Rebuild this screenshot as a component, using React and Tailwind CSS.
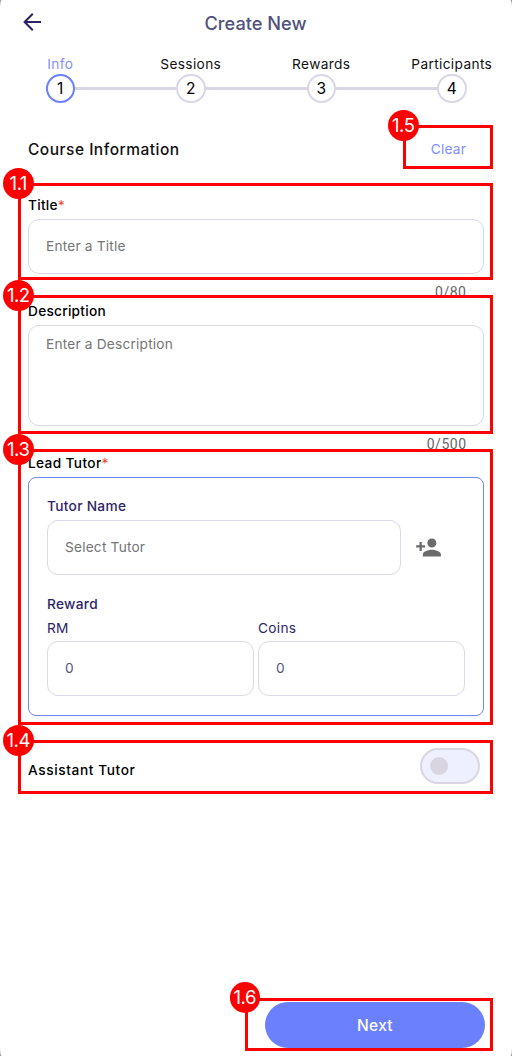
import React from "react";

const steps = [
  { n: 1, label: "Info", active: true },
  { n: 2, label: "Sessions" },
  { n: 3, label: "Rewards" },
  { n: 4, label: "Participants" },
];

function Stepper() {
  return (
    <ol className="mt-2 flex h-[51px] w-[522px] -translate-x-[5px]">
      {steps.map((s, i) => (
        <li key={s.n} className="flex w-[130.5px] shrink-0 flex-col items-center">
          <span
            className={`h-5 whitespace-nowrap text-[13.7px] leading-5 tracking-[0.36px] ${
              s.active ? "text-[#8292ff]" : "text-[#111]"
            }`}
          >
            {s.label}
          </span>
          <div className="-mt-[0.5px] flex w-full items-center">
            <span className={`h-[3px] flex-1 ${i > 0 ? "bg-[#d9d7e6]" : ""}`} />
            <span
              className={`flex h-[29.5px] w-[29.5px] items-center justify-center rounded-full border-2 text-[15.5px] leading-none text-black ${
                s.active ? "border-[#6b80ff]" : "border-[#d9d7e6]"
              }`}
            >
              {s.n}
            </span>
            <span className={`h-[3px] flex-1 ${i < 3 ? "bg-[#d9d7e6]" : ""}`} />
          </div>
        </li>
      ))}
    </ol>
  );
}

function Label({ children, required, tracking = "tracking-[0.25px]" }) {
  return (
    <div className={`h-5 text-[13.7px] font-medium leading-5 text-black ${tracking}`}>
      {children}
      {required && <span className="font-normal text-[#f44336]">*</span>}
    </div>
  );
}

function Field({ children, className = "" }) {
  return (
    <div
      className={`rounded-[11px] border border-[#dad9e7] px-[17px] text-[13.7px] tracking-[0.2px] ${className}`}
    >
      {children}
    </div>
  );
}

function Counter({ children }) {
  return (
    <div className="flex h-[27px] items-end justify-end pr-[17.5px] font-['Roboto',sans-serif] text-[14px] leading-[18px] tracking-[0.5px] text-[#666]">
      {children}
    </div>
  );
}

function Marker({ box, badge, children }) {
  return (
    <>
      <div className={`pointer-events-none absolute border-3 border-[#ff0000] ${box}`} />
      <div
        className={`pointer-events-none absolute flex h-[30.5px] w-[30.5px] items-center justify-center rounded-full bg-[#ff0000] text-[18.5px] leading-none tracking-[-0.5px] text-white ${badge}`}
      >
        {children}
      </div>
    </>
  );
}

export default function App() {
  return (
    <div className="h-[1056px] w-[512px] overflow-hidden bg-[#999]">
      <main className="relative flex h-full w-full flex-col overflow-hidden rounded-[1.5px/9px] bg-white font-['Inter',sans-serif]">
        <header className="flex h-[46px] shrink-0 items-center pl-[21px]">
          <svg className="h-[22px] w-[22px] shrink-0 -translate-y-px" viewBox="0 0 22 22" fill="none" stroke="#2b2169" strokeWidth="2">
            <path d="M20 11H3.600M11.800 2.800L3.600 11l8.200 8.200" />
          </svg>
          <h1 className="ml-[161.5px] text-[18.2px] font-medium leading-6 text-[#50517f]">Create New</h1>
        </header>

        <Stepper />

        <div className="mt-8 flex h-6 items-center justify-between pl-7 pr-[46px]">
          <h2 className="translate-y-[0.8px] text-[15.5px] font-medium tracking-[0.5px] text-[#111]">Course Information</h2>
          <button className="text-[13.7px] tracking-[0.2px] text-[#7d8dff]">Clear</button>
        </div>

        <form className="mt-[34px] flex flex-col pl-7 pr-7">
          <Label required>Title</Label>
          <Field className="mt-1 flex h-[55px] items-center pb-px text-[#757575]">Enter a Title</Field>
          <Counter>0/80</Counter>
          <Label>Description</Label>
          <Field className="mt-1 h-[101px] pt-2 leading-5 text-[#757575]">Enter a Description</Field>
          <Counter>0/500</Counter>
          <Label required tracking="tracking-[0.35px]">Lead Tutor</Label>

          <section className="mt-1 flex h-[239px] flex-col rounded-[8px] border border-[#7385ff] px-[18px] pt-[18px] text-[13.7px] tracking-[0.3px] text-[#2f2569]">
            <div className="h-5 font-medium leading-5">Tutor Name</div>
            <div className="mt-1 flex items-center">
              <Field className="flex h-[55px] w-[354px] items-center text-[#757575]">Select Tutor</Field>
              <svg className="ml-[14px] h-[27px] w-[27px]" viewBox="0 0 24 24" fill="#6b6b6b">
                <path d="M15 12c2.21 0 4-1.79 4-4s-1.79-4-4-4-4 1.79-4 4 1.790 4 4 4zm-9-2V7H4v3H1v2h3v3h2v-3h3v-2H6zm9 4c-2.67 0-8 1.340-8 4v2h16v-2c0-2.660-5.330-4-8-4z" />
              </svg>
            </div>
            <div className="mt-[19px] h-5 font-medium leading-5">Reward</div>
            <div className="mt-1 flex gap-1">
              {["RM", "Coins"].map((name) => (
                <div key={name} className="w-[207px]">
                  <div className="h-5 leading-5">{name}</div>
                  <Field className="mt-[3px] flex h-[55px] items-center text-[#55547f]">0</Field>
                </div>
              ))}
            </div>
          </section>

          <div className="mt-[32px] flex h-9 items-center justify-between pr-1">
            <div className="translate-y-1">
              <Label tracking="tracking-[0.6px]">Assistant Tutor</Label>
            </div>
            <div className="flex h-9 w-[60px] items-center rounded-full border-2 border-[#d8d6e2] bg-[#eeefff] pl-[7.5px]">
              <span className="h-[18px] w-[18px] rounded-full bg-[#d8d5e1]" />
            </div>
          </div>
        </form>

        <footer className="mb-2 mt-auto flex justify-end pr-[27px]">
          <button className="h-[46px] w-[220px] rounded-full bg-[#6b80fc] pt-px text-[15.5px] font-medium tracking-[0.3px] text-white">
            Next
          </button>
        </footer>

        <Marker box="left-[403px] top-[125px] h-[44px] w-[90px]" badge="left-[388px] top-[110px]">1.5</Marker>
        <Marker box="left-[18px] top-[183px] h-[97px] w-[475px]" badge="left-[3px] top-[168px]">1.1</Marker>
        <Marker box="left-[18px] top-[295px] h-[139px] w-[475px]" badge="left-[3px] top-[280px]">1.2</Marker>
        <Marker box="left-[18px] top-[449px] h-[276px] w-[475px]" badge="left-[3px] top-[434px]">1.3</Marker>
        <Marker box="left-[18px] top-[740px] h-[54px] w-[475px]" badge="left-[3px] top-[725px]">1.4</Marker>
        <Marker box="left-[245px] top-[998px] h-[53px] w-[248px]" badge="left-[229.500px] top-[982px]">1.6</Marker>
      </main>
    </div>
  );
}
